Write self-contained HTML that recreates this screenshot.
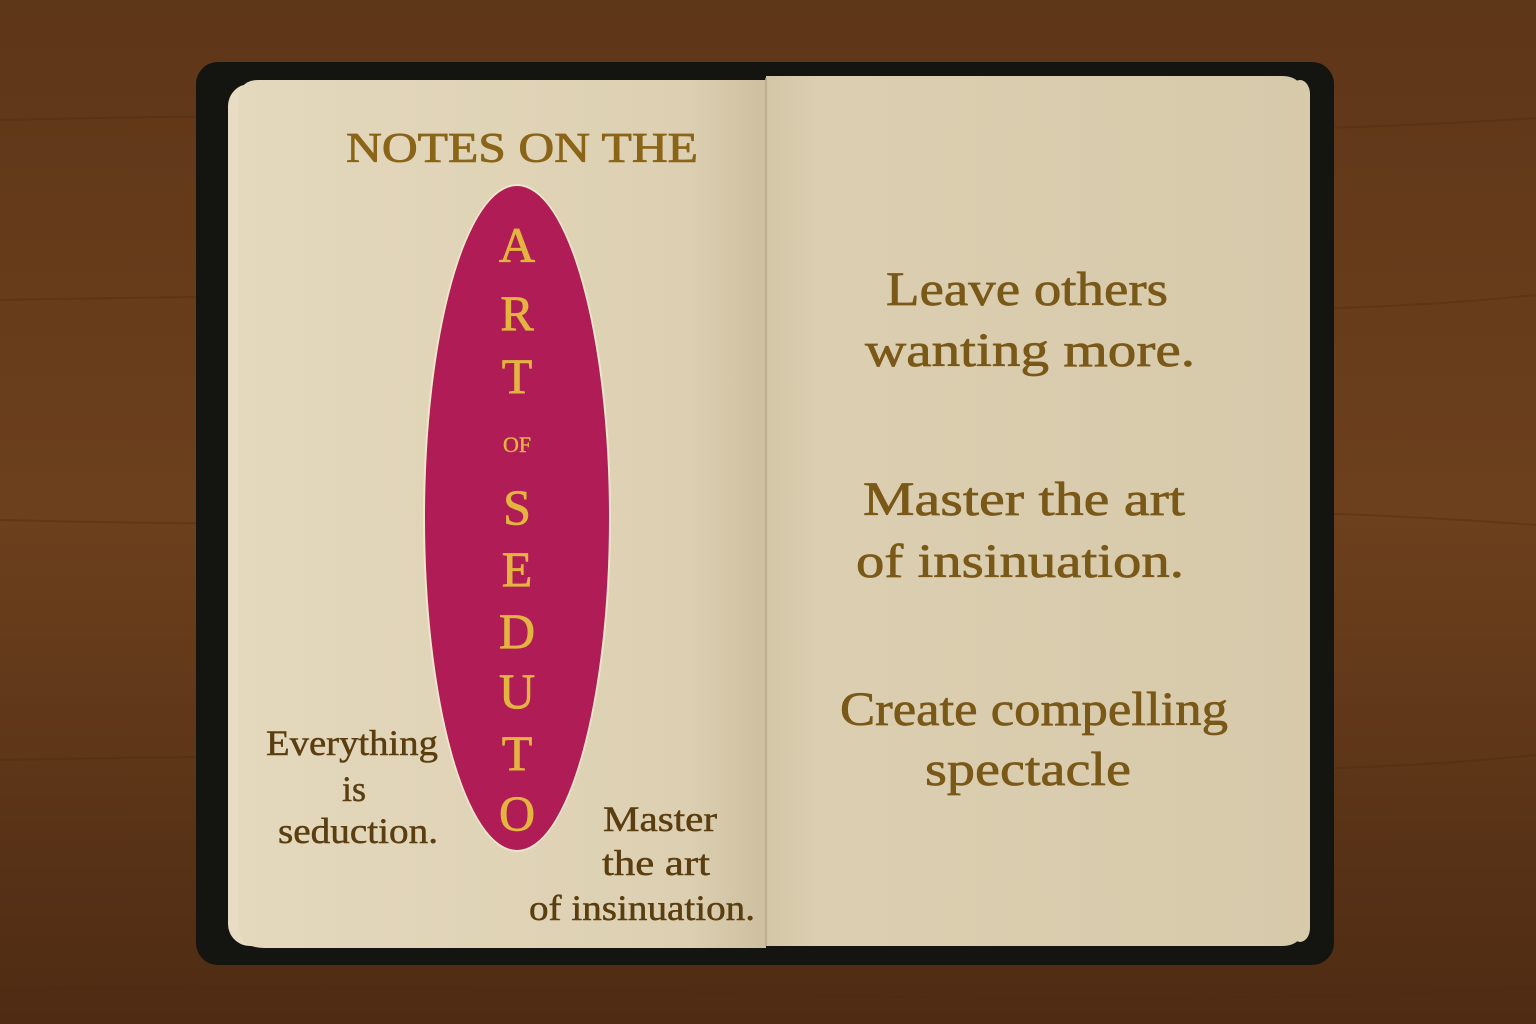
<!DOCTYPE html>
<html><head><meta charset="utf-8"><style>
html,body{margin:0;padding:0;width:1536px;height:1024px;overflow:hidden;background:#55321a;}
svg{display:block}
text{font-family:"Liberation Serif",serif;}
</style></head><body>
<svg width="1536" height="1024" viewBox="0 0 1536 1024">
<defs>
<linearGradient id="wood" x1="0" y1="0" x2="0" y2="1">
<stop offset="0" stop-color="#5e3618"/><stop offset="0.5" stop-color="#6c401d"/><stop offset="1" stop-color="#4e2b13"/>
</linearGradient>
<linearGradient id="lp" x1="0" y1="0" x2="1" y2="0">
<stop offset="0" stop-color="#e4d8bd"/><stop offset="0.85" stop-color="#ddd0b2"/><stop offset="1" stop-color="#cdbf9f"/>
</linearGradient>
<linearGradient id="rp" x1="0" y1="0" x2="1" y2="0">
<stop offset="0" stop-color="#d3c6a7"/><stop offset="0.1" stop-color="#dccfb1"/><stop offset="1" stop-color="#d7caab"/>
</linearGradient>
</defs>
<rect width="1536" height="1024" fill="url(#wood)"/>
<g stroke="#4a2a12" stroke-width="2" opacity="0.35" fill="none">
<path d="M0 120 Q400 110 800 125 T1536 118"/><path d="M0 300 Q500 290 900 305 T1536 295"/>
<path d="M0 520 Q400 530 800 515 T1536 525"/><path d="M0 760 Q500 750 900 765 T1536 755"/>
<path d="M0 990 Q400 985 800 995 T1536 988"/>
</g>
<rect x="196" y="62" width="1138" height="903" rx="22" fill="#141410"/>
<rect x="228" y="84" width="540" height="862" rx="22" fill="#e8ddc4"/>
<rect x="1290" y="80" width="20" height="862" rx="14" fill="#d8cbaa"/>
<path d="M258 80 H766 V948 H264 Q238 948 238 922 V104 Q238 80 258 80 Z" fill="url(#lp)"/>
<path d="M766 76 H1282 Q1304 76 1304 100 V922 Q1304 946 1282 946 H766 Z" fill="url(#rp)"/>
<line x1="766" y1="78" x2="766" y2="946" stroke="#b8a988" stroke-width="1.5"/>
<text x="522" y="162" text-anchor="middle" font-size="42" fill="#8a6518" stroke="#8a6518" stroke-width="0.8" textLength="352" lengthAdjust="spacingAndGlyphs">NOTES ON THE</text>
<ellipse cx="517" cy="518" rx="94" ry="334" fill="#f0e6cc"/>
<ellipse cx="517" cy="518" rx="92" ry="332" fill="#b01c55"/>
<g fill="#e3b540" stroke="#e3b540" stroke-width="0.8" text-anchor="middle" font-size="50">
<text x="517" y="262">A</text><text x="517" y="330">R</text><text x="517" y="393">T</text>
<text x="517" y="452" font-size="22" stroke-width="0.4">OF</text>
<text x="517" y="524">S</text><text x="517" y="586">E</text><text x="517" y="648">D</text>
<text x="517" y="708">U</text><text x="517" y="770">T</text><text x="517" y="830">O</text>
</g>
<g fill="#5a3e10" stroke="#5a3e10" stroke-width="0.5" text-anchor="middle" font-size="36">
<text x="352" y="755" textLength="172" lengthAdjust="spacingAndGlyphs">Everything</text>
<text x="354" y="801">is</text>
<text x="358" y="843" textLength="160" lengthAdjust="spacingAndGlyphs">seduction.</text>
<text x="660" y="831" textLength="114" lengthAdjust="spacingAndGlyphs">Master</text>
<text x="656" y="875" textLength="108" lengthAdjust="spacingAndGlyphs">the art</text>
<text x="642" y="920" textLength="226" lengthAdjust="spacingAndGlyphs">of insinuation.</text>
</g>
<g fill="#7a5818" stroke="#7a5818" stroke-width="0.7" text-anchor="middle" font-size="48">
<text x="1027" y="305" textLength="282" lengthAdjust="spacingAndGlyphs">Leave others</text>
<text x="1030" y="366" textLength="330" lengthAdjust="spacingAndGlyphs">wanting more.</text>
<text x="1024" y="515" textLength="322" lengthAdjust="spacingAndGlyphs">Master the art</text>
<text x="1020" y="577" textLength="328" lengthAdjust="spacingAndGlyphs">of insinuation.</text>
<text x="1034" y="725" textLength="388" lengthAdjust="spacingAndGlyphs">Create compelling</text>
<text x="1028" y="785" textLength="206" lengthAdjust="spacingAndGlyphs">spectacle</text>
</g>
</svg>
</body></html>
